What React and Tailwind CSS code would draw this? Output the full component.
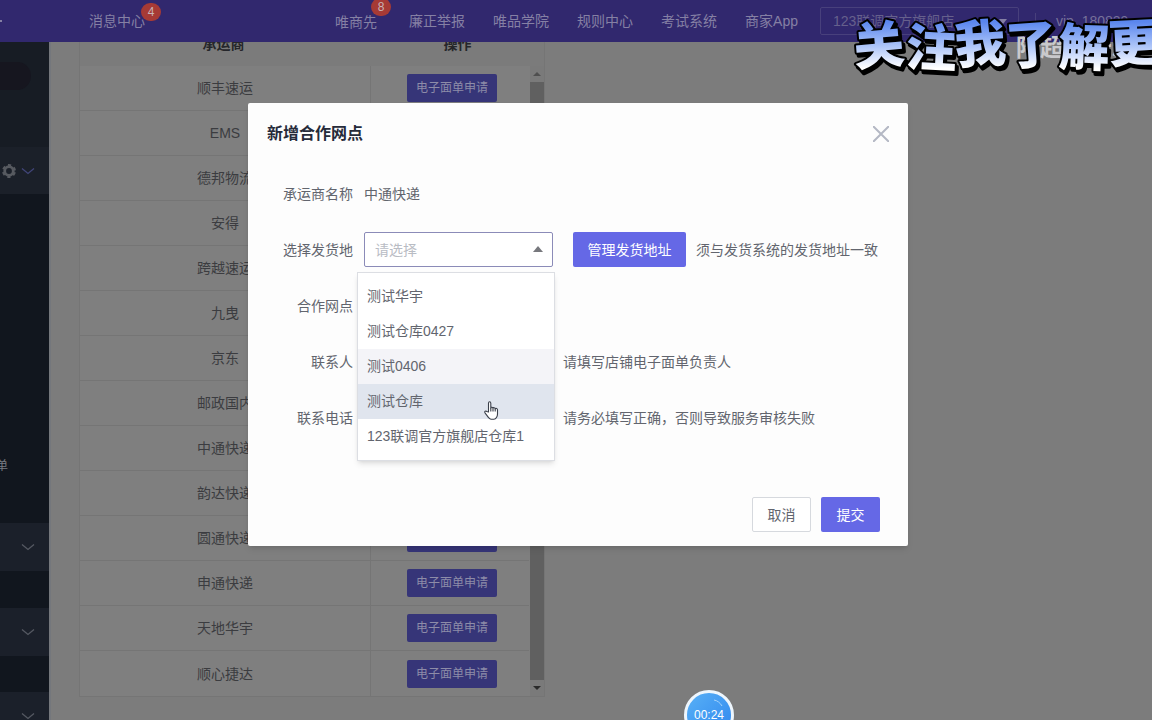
import React from "react";

const carriers = [
  "顺丰速运", "EMS", "德邦物流", "安得", "跨越速运", "九曳", "京东",
  "邮政国内", "中通快递", "韵达快递", "圆通快递", "申通快递", "天地华宇", "顺心捷达",
];
const navLinks = ["廉正举报", "唯品学院", "规则中心", "考试系统", "商家App"];
const places = ["测试华宇", "测试仓库0427", "测试0406", "测试仓库", "123联调官方旗舰店仓库1"];

function Chevron({ className }) {
  return (
    <svg viewBox="0 0 14 8" className={"h-2 w-3.5 " + className} fill="none" stroke="currentColor" strokeWidth="1.3">
      <path d="M1 1.5 7 6.5 13 1.5" />
    </svg>
  );
}

function Gear() {
  return (
    <svg viewBox="0 0 16 16" className="h-4 w-4 text-[#575a60]" fill="none" stroke="currentColor">
      <circle cx="8" cy="8" r="4.3" strokeWidth="2.8" />
      <circle cx="8" cy="8" r="6" strokeWidth="2" strokeDasharray="3.2 3.083" strokeDashoffset="-1.4" />
    </svg>
  );
}

function Header() {
  return (
    <header className="flex h-[42px] shrink-0 items-center bg-[#31286e] text-sm text-[#8580a4]">
      <span className="w-[89px] shrink-0 overflow-hidden">
        <span className="block h-0.5 w-0.5 bg-[#8580a4]" />
      </span>
      <a href="#messages" className="relative whitespace-nowrap">
        消息中心
        <span className="absolute -top-2 left-[52px] flex h-[18px] w-5 items-center justify-center rounded-full bg-[#a63a35] text-xs text-[#c9b3b5]">4</span>
      </a>
      <nav className="ml-auto flex items-center gap-7 whitespace-nowrap">
        <a href="#first" className="relative mr-1 pt-0.5">
          唯商先
          <span className="absolute -top-3 left-9 flex h-[18px] w-5 items-center justify-center rounded-full bg-[#a63a35] text-xs text-[#c9b3b5]">8</span>
        </a>
        {navLinks.map((label) => (
          <a key={label} href={"#" + label}>{label}</a>
        ))}
      </nav>
      <div className="relative ml-[22px] w-[199px] shrink-0">
        <select aria-label="店铺" className="block h-7 w-full appearance-none rounded-xs border border-[#48407c] bg-[#31286e] px-3 text-sm text-[#66608c]">
          <option>123联调官方旗舰店</option>
        </select>
        <svg viewBox="0 0 8 5" className="pointer-events-none absolute top-3 right-3 h-[5px] w-2 fill-[#8580a4]"><path d="M0 0h8L4 5z" /></svg>
      </div>
      <span className="ml-4 h-4 w-px shrink-0 bg-[#48407c]" />
      <span className="w-[116px] shrink-0 pl-5 text-[#77719a]">vip_180839</span>
    </header>
  );
}

function Sidebar() {
  return (
    <aside className="flex w-[49px] shrink-0 flex-col overflow-hidden bg-[#11161e] text-xs text-[#777b82]">
      <div className="h-[105px] shrink-0 bg-[#171c24] pt-5">
        <div className="h-7 w-[31px] rounded-r-full bg-[#16161f]" />
      </div>
      <div className="flex h-[47px] shrink-0 items-center gap-1 bg-[#1b2029] pl-px">
        <Gear />
        <Chevron className="text-[#414579]" />
      </div>
      <div className="h-[329px] shrink-0 overflow-hidden pt-[264px]">
        <a href="#waybill" className="flex w-2 justify-end whitespace-nowrap">电子面单</a>
      </div>
      <div className="flex h-12 shrink-0 items-center justify-end bg-[#1b202a] pr-3.5"><Chevron className="text-[#555962]" /></div>
      <div className="h-[37px] shrink-0" />
      <div className="flex h-12 shrink-0 items-center justify-end bg-[#1b202a] pr-3.5"><Chevron className="text-[#555962]" /></div>
      <div className="h-9 shrink-0" />
      <div className="flex h-12 shrink-0 items-center justify-end bg-[#1b202a] pr-3.5"><Chevron className="text-[#555962]" /></div>
    </aside>
  );
}

function Carriers() {
  return (
    <main className="min-w-0 flex-1 overflow-hidden border-l-2 border-[#74777c] pl-7">
      <section className="w-[466px] border border-t-0 border-[#757575] bg-[#7f7f7f]">
        <div className="flex h-6 overflow-hidden bg-[#7b7b7b] text-sm leading-5 font-bold text-[#25262a]">
          <span className="-mt-2 w-[291px] pr-1 text-center">承运商</span>
          <span className="-mt-2 flex-1 text-center">操作</span>
        </div>
        <div className="flex">
          <table className="w-[449px] table-fixed border-separate border-spacing-0 text-sm text-[#3b3c40]">
            <tbody className="[&>tr:last-child>td]:border-b-0">
              {carriers.map((name) => (
                <tr key={name} className="h-[45px]">
                  <td className="w-[291px] border-r border-b border-[#757575] p-0 text-center">{name}</td>
                  <td className="border-b border-[#757575] p-0 pl-1 text-center align-middle">
                    <button type="button" className="h-7 w-[90px] rounded-xs bg-[#363578] align-middle text-xs text-[#8d8ca8]">电子面单申请</button>
                  </td>
                </tr>
              ))}
            </tbody>
          </table>
          <div className="ml-px flex w-3.5 flex-col items-center bg-[#7a7a7a]">
            <svg viewBox="0 0 8 4" className="my-1.5 h-1 w-2 shrink-0 fill-[#4f4f4f]"><path d="M0 4h8L4 0z" /></svg>
            <div className="w-full flex-1 bg-[#606060]" />
            <svg viewBox="0 0 8 4" className="my-1.5 h-1 w-2 shrink-0 fill-[#2a2a2a]"><path d="M0 0h8L4 4z" /></svg>
          </div>
        </div>
      </section>
    </main>
  );
}

function Row({ label, id, children }) {
  return (
    <div className="grid h-[35px] grid-cols-[105px_1fr] items-center gap-x-[11px]">
      <label htmlFor={id} className="text-right">{label}</label>
      <div className="flex items-center gap-2.5 whitespace-nowrap">{children}</div>
    </div>
  );
}

const inputClass = "h-[35px] w-[189px] rounded-xs border border-[#d3d6de] px-2.5";

function PlaceSelect() {
  return (
    <div className="relative mr-2.5 w-[189px]">
      <select id="place" defaultValue="" className="block h-[35px] w-full appearance-none rounded-xs border border-[#8b8bb8] bg-white px-2.5 text-sm text-[#b9bcc4]">
        <option value="">请选择</option>
        {places.map((p) => <option key={p}>{p}</option>)}
      </select>
      <svg viewBox="0 0 10 6" className="pointer-events-none absolute top-3.5 right-2.5 h-1.5 w-2.5 fill-[#77787d]"><path d="M0 6h10L5 0z" /></svg>
      <ul role="listbox" aria-label="选择发货地" className="absolute top-10 -left-[7px] z-10 w-[198px] border border-[#dcdee3] bg-white py-1.5 shadow-md">
        {places.map((p, i) => (
          <li
            key={p}
            role="option"
            aria-selected={i === 3}
            className={"h-[35px] px-[9px] leading-[35px] " + (i === 2 ? "bg-[#f4f4f8]" : i === 3 ? "bg-[#e0e5ee]" : "")}
          >
            {p}
          </li>
        ))}
      </ul>
      <svg viewBox="0 0 15 19" className="absolute top-[169px] left-[120px] z-20 h-[19px] w-[15px]" fill="#fff" stroke="#3a3f4a" strokeWidth="1.1" strokeLinejoin="round">
        <path d="M4.500 11V2.200c0-2 2.300-2 2.300 0V7c.3-1.200 2-1 2.200.3.5-1 2-.8 2.200.5.6-.8 2.300-.5 2.300.9v4.200c0 2.500-1.500 5.300-3.500 5.300H7.200C5 18.200 3.200 14.500 1 11.800c-.8-1.300.8-2.300 1.800-1.300z" />
        <path d="M6.800 7v3.500M9 7.500v3M11.200 8v2.500" fill="none" />
      </svg>
    </div>
  );
}

function Dialog() {
  return (
    <div className="absolute inset-0 flex items-start justify-center pt-[103px] pl-1">
      <form role="dialog" aria-labelledby="dialog-title" onSubmit={(e) => e.preventDefault()} className="w-[660px] rounded-xs bg-[#fdfdfd] pb-3.5 text-sm text-[#62656e] shadow-md">
        <div className="flex h-[61px] items-center justify-between px-[19px]">
          <h2 id="dialog-title" className="text-base font-bold text-[#262b3a]">新增合作网点</h2>
          <button type="button" aria-label="关闭" className="p-0 text-[#b4b8c4]">
            <svg viewBox="0 0 16 16" className="h-4 w-4" stroke="currentColor" strokeWidth="2"><path d="M0 0 16 16M16 0 0 16" /></svg>
          </button>
        </div>
        <div className="mt-3 flex flex-col gap-[21px]">
          <Row label="承运商名称" id="carrier"><output id="carrier">中通快递</output></Row>
          <Row label="选择发货地" id="place">
            <PlaceSelect />
            <button type="button" className="h-[35px] w-[113px] rounded-xs bg-[#6568e6] text-white">管理发货地址</button>
            <span>须与发货系统的发货地址一致</span>
          </Row>
          <Row label="合作网点" id="branch"><input id="branch" className={inputClass} /></Row>
          <Row label="联系人" id="contact">
            <input id="contact" className={inputClass} />
            <span>请填写店铺电子面单负责人</span>
          </Row>
          <Row label="联系电话" id="phone">
            <input id="phone" className={inputClass} />
            <span>请务必填写正确，否则导致服务审核失败</span>
          </Row>
        </div>
        <div className="mt-[62px] flex justify-end gap-2.5 pr-7">
          <button type="button" className="h-[35px] w-[59px] rounded-xs border border-[#d6d9de] bg-white">取消</button>
          <button type="submit" className="h-[35px] w-[59px] rounded-xs bg-[#6568e6] text-white">提交</button>
        </div>
      </form>
    </div>
  );
}

function Sticker() {
  return (
    <div className="pointer-events-none absolute top-0 right-0 h-24 w-[302px] overflow-hidden">
      <span className="absolute top-8 left-[166px] text-2xl font-bold whitespace-nowrap text-[#c9c9cc]">陪超级云示</span>
      <svg viewBox="0 0 302 96" className="absolute inset-0 h-24 w-[302px]">
        <defs>
          <linearGradient id="sky" gradientUnits="userSpaceOnUse" x1="0" y1="16" x2="0" y2="74">
            <stop offset="0.1" stopColor="#5a86ee" />
            <stop offset="0.5" stopColor="#a9c2f8" />
            <stop offset="0.9" stopColor="#ffffff" />
          </linearGradient>
        </defs>
        <g fontFamily="'Noto Sans CJK SC', sans-serif" fontSize="51" fontWeight="900" strokeLinejoin="round">
          <text x="7 57 108 159 210 261" y="69 68 67 68 68 66" rotate="-5 3 -4 -4 2 -3" fill="#000" stroke="#000" strokeWidth="4">关注我了解更</text>
          <text x="5 55 106 157 208 259" y="66 65 64 65 65 63" rotate="-5 3 -4 -4 2 -3" fill="url(#sky)" stroke="#000" strokeWidth="4" paintOrder="stroke">关注我了解更</text>
        </g>
      </svg>
    </div>
  );
}

export default function App() {
  return (
    <div className="relative flex h-screen flex-col overflow-hidden bg-[#7c7c7c] font-['Liberation_Sans','Noto_Sans_CJK_SC',sans-serif]">
      <Header />
      <div className="flex min-h-0 flex-1">
        <Sidebar />
        <Carriers />
      </div>
      <Dialog />
      <Sticker />
      <div className="absolute -bottom-5 left-[684px] flex h-[50px] w-[50px] items-center justify-center rounded-full border-3 border-[#eef6fd] bg-linear-to-br from-[#58b0f6] to-[#2f86ee] text-xs text-white">
        <svg viewBox="0 0 10 8" className="absolute top-1.5 right-2 h-2 w-2.5" fill="none" stroke="#a5d3fb"><path d="M1 1C4 1.500 7 3.500 9 7" /></svg>
        00:24
      </div>
    </div>
  );
}
